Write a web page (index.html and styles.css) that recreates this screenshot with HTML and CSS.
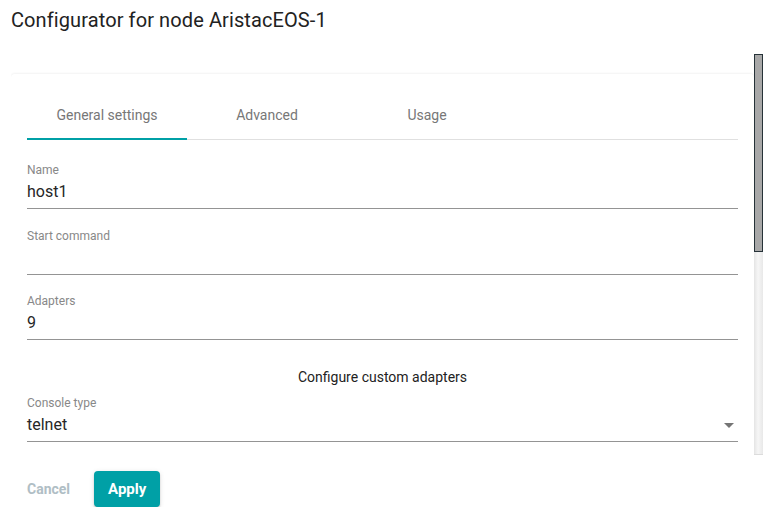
FILE: index.html
```html
<!DOCTYPE html>
<html lang="en">
<head>
<meta charset="utf-8">
<title>Configurator for node AristacEOS-1</title>
<link rel="stylesheet" href="styles.css">
</head>
<body>
<div class="dialog">
  <h1 class="title">Configurator for node AristacEOS-1</h1>
  <div class="scroll-area">
    <div class="viewport">
      <div class="card">
        <div class="tabs">
          <div class="tab active">General settings</div>
          <div class="tab">Advanced</div>
          <div class="tab">Usage</div>
        </div>
        <form class="form">
          <div class="field">
            <div class="label">Name</div>
            <div class="value">host1</div>
          </div>
          <div class="field">
            <div class="label">Start command</div>
            <div class="value"></div>
          </div>
          <div class="field">
            <div class="label">Adapters</div>
            <div class="value">9</div>
          </div>
          <div class="custom">Configure custom adapters</div>
          <div class="field select">
            <div class="label">Console type</div>
            <div class="value"><span>telnet</span><span class="arrow"></span></div>
          </div>
        </form>
      </div>
    </div>
    <div class="scrollbar">
      <div class="thumb"></div>
    </div>
  </div>
  <div class="actions">
    <button class="btn cancel" type="button">Cancel</button>
    <button class="btn apply" type="button">Apply</button>
  </div>
</div>
</body>
</html>
```

FILE: styles.css
```css
* { box-sizing: border-box; }

html, body {
  margin: 0;
  padding: 0;
  background: #ffffff;
  font-family: Roboto, "Liberation Sans", Arial, sans-serif;
  color: #212121;
}

.dialog {
  padding: 8px 12px 0 11px;
}

.title {
  margin: 0 0 22px 0;
  font-size: 20px;
  line-height: 24px;
  font-weight: 400;
  letter-spacing: 0.1px;
  color: #222222;
}

.scroll-area {
  display: flex;
  height: 401px;
}

.viewport {
  flex: 1;
  overflow: hidden;
  padding-top: 20px;
}

.scrollbar {
  width: 9px;
  display: flex;
  flex-direction: column;
  background: linear-gradient(to right, #e4e4e4, #f6f6f6 45%, #e8e8e8);
  border-bottom: 1px solid #dcdcdc;
}

.thumb {
  height: 198px;
  background: #a8a8a8;
  border: 1px solid #263238;
}

.card {
  background: #ffffff;
  box-shadow: 0 -1px 2px rgba(0, 0, 0, 0.05);
  border-radius: 4px;
  padding: 19px 16px 40px 16px;
}

.tabs {
  display: flex;
  border-bottom: 1px solid #e0e0e0;
}

.tab {
  width: 160px;
  height: 47px;
  display: flex;
  align-items: center;
  justify-content: center;
  padding-bottom: 2px;
  font-size: 14px;
  color: #777777;
  border-bottom: 2px solid transparent;
  margin-bottom: -1px;
}

.tab.active {
  border-bottom-color: #00a0a6;
}

.form {
  display: flex;
  flex-direction: column;
  padding-top: 22px;
}

.field {
  border-bottom: 1px solid #949494;
  padding-bottom: 6px;
  margin-bottom: 18px;
}

.field:first-child {
  margin-bottom: 19px;
}

.label {
  font-size: 12px;
  line-height: 16px;
  color: #888888;
}

.value {
  margin-top: 4px;
  font-size: 16px;
  line-height: 20px;
  height: 20px;
  color: #262626;
  display: flex;
  align-items: center;
  justify-content: space-between;
}

.custom {
  text-align: center;
  font-size: 14px;
  line-height: 20px;
  margin: 9px 0 8px 0;
  color: #222222;
}

.arrow {
  width: 0;
  height: 0;
  border-left: 5px solid transparent;
  border-right: 5px solid transparent;
  border-top: 5px solid #757575;
  margin-right: 4px;
}

.actions {
  display: flex;
  gap: 8px;
  padding-top: 16px;
}

.btn {
  font-family: Roboto, "Liberation Sans", Arial, sans-serif;
  font-size: 14px;
  font-weight: 700;
  height: 36px;
  padding: 0 16px;
  border: none;
  border-radius: 4px;
  background: transparent;
  cursor: pointer;
}

.cancel {
  color: #b0bec5;
}

.apply {
  background: #00a0a6;
  color: #ffffff;
  font-size: 15px;
  padding: 0 14px;
  box-shadow: 0 3px 1px -2px rgba(0, 0, 0, 0.2), 0 2px 2px 0 rgba(0, 0, 0, 0.14), 0 1px 5px 0 rgba(0, 0, 0, 0.12);
}
```
